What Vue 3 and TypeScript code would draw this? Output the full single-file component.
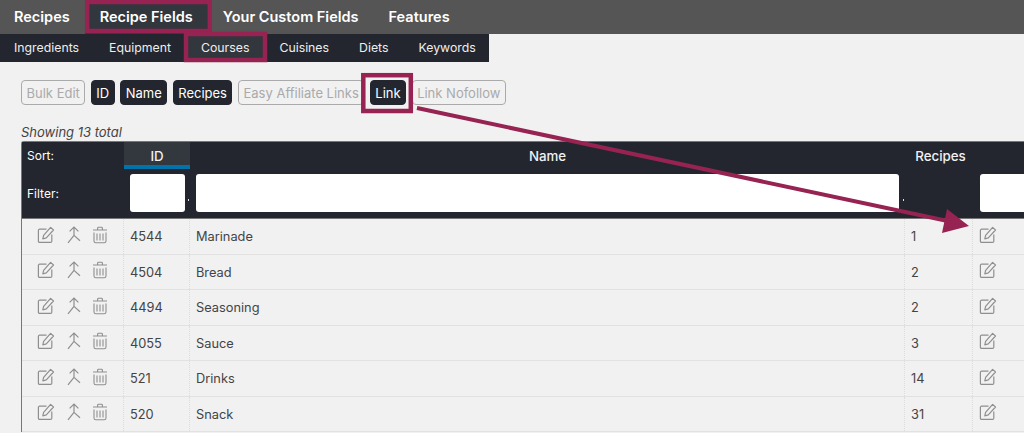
<template>
  <div class="page">
    <svg class="defs" width="0" height="0">
      <symbol id="i-edit" viewBox="0 0 18 18">
        <path d="M9.5 3.200H2.600a1.200 1.200 0 0 0-1.200 1.200v10.800a1.200 1.200 0 0 0 1.200 1.200h11a1.200 1.200 0 0 0 1.200-1.200V8.600" fill="none" stroke="currentColor" stroke-width="1.200" />
        <path d="M6.600 9.400 13.600 1.400l2.900 2.600-7.200 7.800-3.500 1z" fill="none" stroke="currentColor" stroke-width="1.200" stroke-linejoin="round" />
      </symbol>
      <symbol id="i-merge" viewBox="0 0 14 18">
        <path d="M7 1v8.400M2.600 5.400 7 1l4.400 4.400M7 9.400 1 16.800M7 9.400l6 5.400" fill="none" stroke="currentColor" stroke-width="1.200" />
      </symbol>
      <symbol id="i-trash" viewBox="0 0 16 18">
        <path d="M1 4h14M5.600 4V2.200q0-.9.900-.9h3q.9 0 .9.900V4M2 6.400v8.600q0 1.800 1.800 1.800h8.400q1.800 0 1.800-1.800V6.400M5 7.600v6.800M8 7.600v6.800M11 7.600v6.800" fill="none" stroke="currentColor" stroke-width="1.100" />
      </symbol>
    </svg>

    <nav class="main-nav">
      <a v-for="item in mainNav" :key="item" class="main-link" :class="{ active: item === 'Recipe Fields' }">{{ item }}</a>
    </nav>
    <nav class="sub-nav">
      <a v-for="item in subNav" :key="item" class="sub-link" :class="{ active: item === 'Courses' }">{{ item }}</a>
    </nav>

    <div class="content">
      <div class="columns">
        <button v-for="col in columns" :key="col.label" class="col-btn" :class="{ on: col.on }">{{ col.label }}</button>
      </div>
      <div class="total">Showing 13 total</div>

      <div class="table">
        <div class="head">
          <div class="sort-row grid">
            <div class="label">Sort:</div>
            <div class="sort-cell sorted">ID</div>
            <div class="sort-cell">Name</div>
            <div class="sort-cell recipes-head">Recipes</div>
            <div></div>
          </div>
          <div class="filter-row grid">
            <div class="label">Filter:</div>
            <div class="filter-cell"><span class="fake-input"></span><i class="dot"></i></div>
            <div class="filter-cell"><span class="fake-input"></span><i class="dot"></i></div>
            <div class="filter-cell"></div>
            <div class="filter-cell"><span class="fake-input"></span></div>
          </div>
        </div>
        <div v-for="row in rows" :key="row.id" class="row grid">
          <div class="cell actions">
            <svg class="icon edit"><use href="#i-edit" /></svg>
            <svg class="icon merge"><use href="#i-merge" /></svg>
            <svg class="icon trash"><use href="#i-trash" /></svg>
          </div>
          <div class="cell">{{ row.id }}</div>
          <div class="cell">{{ row.name }}</div>
          <div class="cell">{{ row.recipes }}</div>
          <div class="cell link-cell"><svg class="icon edit"><use href="#i-edit" /></svg></div>
        </div>
      </div>
    </div>

    <!-- annotations drawn over the screenshot -->
    <svg class="annotations" width="1024" height="433" viewBox="0 0 1024 433">
      <g fill="none" stroke="#962351" stroke-width="4.500">
        <rect x="87.200" y="2" width="122.600" height="29" />
        <rect x="186" y="34" width="79" height="26" />
        <rect x="363.300" y="75.200" width="47.500" height="35.800" />
      </g>
      <line x1="417" y1="108" x2="950" y2="221.500" stroke="#962351" stroke-width="4" />
      <path d="M969 226 947 209 942 233z" fill="#962351" />
    </svg>
  </div>
</template>

<script setup lang="ts">
interface Row {
  id: number
  name: string
  recipes: number
}

const mainNav = ['Recipes', 'Recipe Fields', 'Your Custom Fields', 'Features']
const subNav = ['Ingredients', 'Equipment', 'Courses', 'Cuisines', 'Diets', 'Keywords']

const columns = [
  { label: 'Bulk Edit', on: false },
  { label: 'ID', on: true },
  { label: 'Name', on: true },
  { label: 'Recipes', on: true },
  { label: 'Easy Affiliate Links', on: false },
  { label: 'Link', on: true },
  { label: 'Link Nofollow', on: false },
]

const rows: Row[] = [
  { id: 4544, name: 'Marinade', recipes: 1 },
  { id: 4504, name: 'Bread', recipes: 2 },
  { id: 4494, name: 'Seasoning', recipes: 2 },
  { id: 4055, name: 'Sauce', recipes: 3 },
  { id: 521, name: 'Drinks', recipes: 14 },
  { id: 520, name: 'Snack', recipes: 31 },
]
</script>

<style>
html,
body {
  margin: 0;
  overflow: hidden;
  background: #f1f1f1;
}
</style>

<style scoped>
.page {
  position: relative;
  width: 1024px;
  height: 433px;
  overflow: hidden;
  background: #f1f1f1;
  font-family: Inter, "Liberation Sans", sans-serif;
  color: #444;
}

.defs {
  position: absolute;
}

.main-nav {
  display: flex;
  height: 34px;
  background: #555;
}

.main-link {
  padding: 0 15px;
  line-height: 33px;
  font-size: 14.500px;
  font-weight: 600;
  color: #fff;
}

.main-link:first-child {
  padding-left: 14px;
}

.main-link.active {
  background: #32363d;
}

.sub-nav {
  display: flex;
  width: 489px;
  height: 28px;
  background: #23262e;
}

.sub-link {
  padding: 0 15px;
  line-height: 28px;
  font-size: 12.300px;
  color: #eee;
}

.sub-link:first-child {
  padding-left: 14px;
}

.sub-link.active {
  background: #32363d;
}

.content {
  padding: 18px 0 0 21px;
}

.columns {
  display: flex;
  gap: 5.500px;
  height: 25px;
}

.col-btn {
  padding: 0 4.500px;
  border: 1px solid #aaa;
  border-radius: 4px;
  background: transparent;
  font: 13px Inter, "Liberation Sans", sans-serif;
  color: #aaa;
}

.col-btn.on {
  border-color: #23262e;
  background: #23262e;
  color: #fff;
}

.total {
  margin-top: 19px;
  height: 17px;
  line-height: 17px;
  font-size: 13px;
  font-style: italic;
  color: #444;
}

.table {
  width: 1100px;
  border-left: 1px solid #777;
  border-top: 1px solid #777;
  border-top-left-radius: 3px;
}

.grid {
  display: grid;
  grid-template-columns: 102px 66px 715px 68px 1fr;
}

.head {
  height: 76.400px;
  border-bottom: 1px solid #777;
  background: #23262e;
  color: #fff;
  font-size: 12px;
}

.sort-row {
  height: 27px;
}

.label {
  padding-left: 5px;
  line-height: 28px;
}

.filter-row .label {
  line-height: 50px;
}

.sort-cell {
  text-align: center;
  font-size: 13.300px;
  font-weight: 500;
  line-height: 28px;
  color: #f1f1f1;
}

.sort-cell.sorted {
  height: 23px;
  background: #33373e;
  border-bottom: 4px solid #0073aa;
}

.recipes-head {
  padding-left: 3px;
}

.filter-row {
  height: 49px;
}

.filter-cell {
  position: relative;
  padding: 5px 6px 0;
}

.fake-input {
  display: block;
  height: 38px;
  margin-right: -1px;
  border-radius: 3px;
  background: #fff;
}

.filter-cell:nth-child(3) .fake-input {
  margin-right: 0;
}

.filter-cell:nth-child(5) {
  padding-left: 7px;
}

.dot {
  position: absolute;
  right: 1px;
  top: 30px;
  width: 1px;
  height: 2px;
  background: #ddd;
}

.row {
  height: 35.500px;
  box-sizing: border-box;
  border-bottom: 1px solid #e1e1e1;
  font-size: 12.800px;
  color: #444;
}

.cell {
  display: flex;
  align-items: center;
  padding-left: 6px;
  border-right: 1px dotted #ddd;
}

.actions {
  padding-left: 15px;
}

.icon {
  flex: none;
  margin-bottom: 4px;
  color: #8f8f8f;
}

.edit {
  width: 18px;
  height: 18px;
}

.merge {
  width: 14px;
  height: 18px;
  margin-left: 12px;
}

.trash {
  width: 16px;
  height: 18px;
  margin-left: 11px;
}

.link-cell {
  border-right: none;
}

.annotations {
  position: absolute;
  top: 0;
  left: 0;
}
</style>
